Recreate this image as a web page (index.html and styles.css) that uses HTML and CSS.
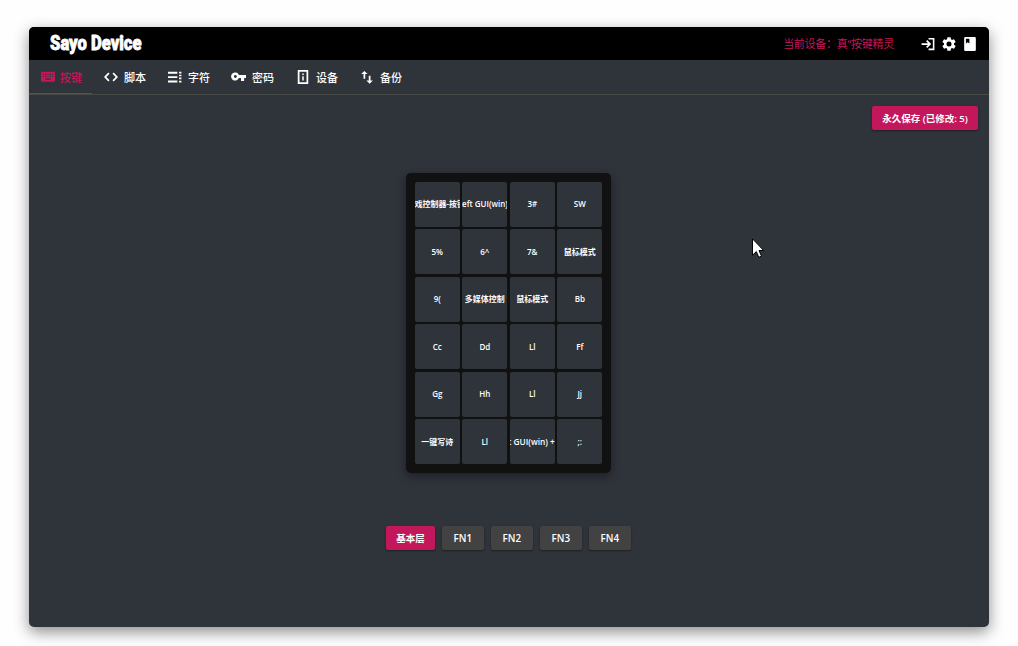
FILE: index.html
```html
<!DOCTYPE html>
<html lang="zh-CN">
<head>
<meta charset="utf-8">
<title>Sayo Device</title>
<link rel="stylesheet" href="styles.css">
</head>
<body>
<div class="window">
  <header class="header">
    <h1 class="brand">Sayo Device</h1>
    <span class="device">当前设备：真“按键精灵</span>
    <div class="actions">
      <svg viewBox="0 0 24 24"><path d="M1 10.500h11L8.700 7.200 10.700 5.200l6.800 6.800-6.800 6.800-2-2L12 13.500H1zM13 1.500h10v21H13v-2.700h7.300V4.200H13z"/></svg>
      <svg viewBox="0 0 24 24"><path d="M19.140 12.940c.04-.3.06-.61.06-.94s-.02-.64-.07-.94l2.030-1.580a.49.49 0 0 0 .12-.61l-1.920-3.320a.49.49 0 0 0-.59-.22l-2.390.96a7 7 0 0 0-1.620-.94l-.36-2.540a.48.48 0 0 0-.48-.41h-3.840a.48.48 0 0 0-.47.41l-.36 2.540c-.59.24-1.130.57-1.620.94l-2.390-.96a.48.48 0 0 0-.59.22L2.740 8.870a.48.48 0 0 0 .12.61l2.030 1.580a6 6 0 0 0 0 1.880l-2.030 1.580a.49.49 0 0 0-.12.61l1.920 3.320c.12.22.37.29.59.22l2.390-.96c.5.38 1.030.7 1.620.94l.36 2.540c.05.24.24.41.48.41h3.840c.24 0 .44-.17.47-.41l.36-2.540c.59-.24 1.130-.56 1.620-.94l2.390.96c.22.08.47 0 .59-.22l1.920-3.320a.48.48 0 0 0-.12-.61zM12 15.600a3.600 3.600 0 1 1 0-7.200 3.600 3.600 0 0 1 0 7.200z" transform="translate(-2.400 -2.400) scale(1.200)"/></svg>
      <svg viewBox="0 0 24 24"><path d="M4 0h16a2 2 0 0 1 2 2v20a2 2 0 0 1-2 2H4a2 2 0 0 1-2-2V2a2 2 0 0 1 2-2zm1 3v8l3-2 3 2V3z"/></svg>
    </div>
  </header>
  <nav class="tabs">
    <div class="tab active"><svg viewBox="0 0 24 24"><path fill-rule="evenodd" d="M2 3h20a2 2 0 0 1 2 2v13a2 2 0 0 1-2 2H2a2 2 0 0 1-2-2V5a2 2 0 0 1 2-2zm1 3v2h2V6zm4 0v2h2V6zm4 0v2h2V6zm4 0v2h2V6zm4 0v2h2V6zM3 10v2h2v-2zm4 0v2h2v-2zm4 0v2h2v-2zm4 0v2h2v-2zm4 0v2h2v-2zM7 14.500v2h10v-2z"/></svg><span>按键</span></div>
    <div class="tab"><svg viewBox="0 0 24 24"><path d="M9.500 17.500 4 12l5.500-5.500-2.200-2.200L0 12l7.300 7.700zm5 0L20 12l-5.500-5.500 2.200-2.200L24 12l-7.300 7.700z"/></svg><span>脚本</span></div>
    <div class="tab"><svg viewBox="0 0 24 24"><path d="M0 3h16v3.400H0zm0 7.500h16v3.400H0zM0 18h16v3.400H0zM19 3h4v3h-4zm0 5h4v2.500h-4zm0 5h4v3h-4zm0 5.400h4v3h-4z"/></svg><span>字符</span></div>
    <div class="tab"><svg class="key-icon" viewBox="0 0 24 24"><path d="M12.600 9.500A6.500 6.500 0 1 0 12.600 14.500H16v4.500h5v-4.500h3v-5zM7 14.300a2.300 2.300 0 1 1 0-4.600 2.300 2.300 0 0 1 0 4.600z"/></svg><span>密码</span></div>
    <div class="tab"><svg viewBox="0 0 24 24"><path fill-rule="evenodd" d="M3 0h18v24H3zm3 3v18h12V3zm4.700 3h2.600v2.600h-2.600zm0 4.600h2.600V18h-2.600z"/></svg><span>设备</span></div>
    <div class="tab"><svg viewBox="0 0 24 24"><path d="M7.500 1.500 2 7h4v8h3V7h4zM15 10v8h-4l5.500 5.500L22 18h-4v-8z"/></svg><span>备份</span></div>
  </nav>
  <main class="content">
    <div class="toolbar"><button class="btn primary save">永久保存 (已修改: 5)</button></div>
    <div class="keypad">
      <div class="key pad"><span>游戏控制器-按键</span></div><div class="key wide"><span>Left GUI(win)</span></div><div class="key"><span>3#</span></div><div class="key"><span>SW</span></div>
      <div class="key"><span>5%</span></div><div class="key"><span>6^</span></div><div class="key"><span>7&amp;</span></div><div class="key"><span>鼠标模式</span></div>
      <div class="key"><span>9(</span></div><div class="key"><span>多媒体控制</span></div><div class="key"><span>鼠标模式</span></div><div class="key"><span>Bb</span></div>
      <div class="key"><span>Cc</span></div><div class="key"><span>Dd</span></div><div class="key"><span>Ll</span></div><div class="key"><span>Ff</span></div>
      <div class="key"><span>Gg</span></div><div class="key"><span>Hh</span></div><div class="key"><span>Ll</span></div><div class="key"><span>Jj</span></div>
      <div class="key"><span>一键写诗</span></div><div class="key"><span>Ll</span></div><div class="key combo"><span>Left GUI(win) + Ll</span></div><div class="key"><span>;:</span></div>
    </div>
    <div class="layers">
      <button class="btn primary base">基本层</button><button class="btn">FN1</button><button class="btn">FN2</button><button class="btn">FN3</button><button class="btn">FN4</button>
    </div>
  </main>
</div>
<svg class="cursor" viewBox="0 0 12 20"><path d="M.5.8v16.400l3.800-3.600 2.500 5.700 2.700-1.200L7 12.500h4.700z"/></svg>
</body>
</html>
```
FILE: styles.css
```css
* { box-sizing: border-box; }
body {
  margin: 0;
  height: 646px;
  padding: 27px 29px 0;
  overflow: hidden;
  background: #fefefe;
  font-family: "Open Sans", "Noto Sans CJK SC", sans-serif;
  color: #fff;
}
svg { display: block; fill: currentColor; flex: none; }
.window {
  width: 960px;
  height: 600px;
  border-radius: 5px;
  overflow: hidden;
  background: #2f333a;
  box-shadow: 0 5px 15px rgba(0, 0, 0, .45);
}
.header {
  height: 33px;
  padding: 0 12px 0 20.500px;
  display: flex;
  align-items: center;
  background: #000;
}
.brand {
  margin: 0;
  width: 92px;
  font: 900 20px/33px Roboto, sans-serif;
  white-space: nowrap;
  transform: scaleX(.83);
  transform-origin: left;
  -webkit-text-stroke: .8px #fff;
}
.device {
  margin-left: auto;
  margin-right: 27px;
  font-size: 11px;
  line-height: 33px;
  letter-spacing: -.27px;
  color: #c2185b;
}
.actions { display: flex; gap: 7px; }
.actions svg { width: 14px; height: 14px; }
.tabs {
  height: 35px;
  display: flex;
  border-bottom: 1px solid #484a46;
}
.tab {
  width: 64px;
  height: 34px;
  padding: 0 0 1px 11px;
  display: flex;
  align-items: center;
  gap: 6px;
  font-size: 11px;
  font-weight: 500;
  white-space: nowrap;
}
.tab svg { width: 14px; height: 14px; }
.tab .key-icon { width: 15px; height: 15px; margin: 0 0 0 -1px; }
.tab.active {
  width: 63px;
  margin-right: 1px;
  padding: 0 0 0 12px;
  gap: 5px;
  color: #c2185b;
  border-bottom: 1px solid #c2185b;
}
.content {
  display: flex;
  flex-direction: column;
  align-items: center;
}
.toolbar {
  width: 100%;
  padding: 11px 11px 0 0;
  display: flex;
  justify-content: flex-end;
}
.btn {
  width: 42.500px;
  height: 24px;
  padding: 0;
  border: 0;
  border-radius: 2px;
  background: #424242;
  color: #fff;
  font: 600 9.800px/25px "Open Sans", "Noto Sans CJK SC", sans-serif;
  white-space: nowrap;
  box-shadow: 0 1px 2px rgba(0, 0, 0, .4);
}
.primary { background: #c2185b; font-size: 9.500px; }
.save { width: 106px; }
.base { width: 49px; }
.keypad {
  width: 205px;
  height: 300px;
  margin: 43px 1px 0 0;
  padding: 8.700px 8px 8px 8.800px;
  display: grid;
  grid-template-columns: repeat(4, 45px);
  grid-template-rows: repeat(6, 45px);
  gap: 2.500px;
  border-radius: 5px;
  background: #111;
  box-shadow: 0 3px 10px rgba(0, 0, 0, .4);
}
.key {
  display: flex;
  align-items: center;
  justify-content: center;
  overflow: hidden;
  border-radius: 2px;
  background: #2f333a;
  font-size: 8px;
  line-height: 11px;
  font-weight: 600;
  white-space: nowrap;
}
.key span { margin-bottom: 1px; }
.key.pad span { margin-right: 3px; }
.key.wide span { margin-right: 4px; }
.key.combo { font-size: 8.300px; }
.key.combo span { margin-right: 5px; }
.layers {
  margin: 53px 1px 0 0;
  display: flex;
  gap: 6.500px;
}
.cursor {
  position: absolute;
  left: 752px;
  top: 238px;
  width: 12px;
  height: 20px;
  fill: #fff;
  stroke: #000;
  stroke-width: 1px;
}
```
